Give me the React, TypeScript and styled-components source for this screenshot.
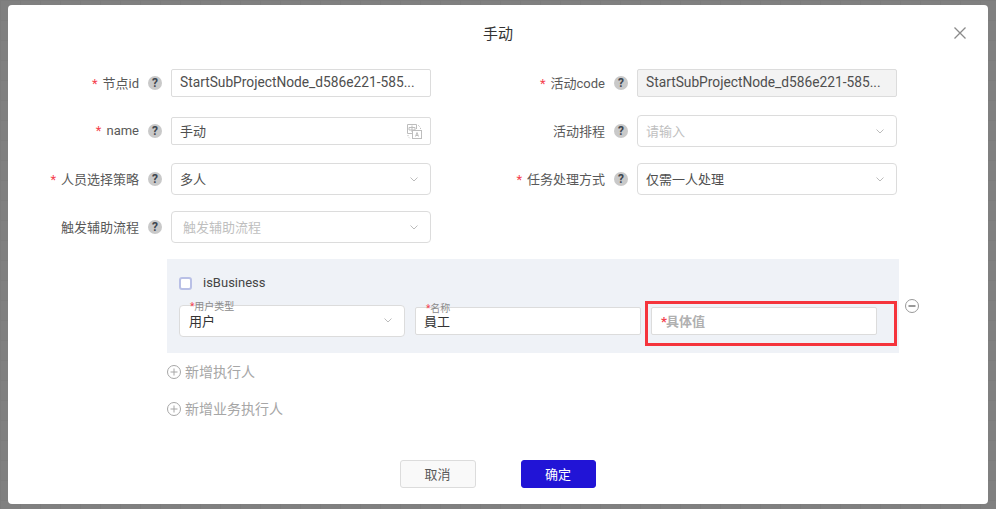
import React from "react";
import styled, { createGlobalStyle } from "styled-components";

const FONT = `Roboto, "Noto Sans CJK SC", sans-serif`;

const GlobalStyle = createGlobalStyle`
  html, body {
    margin: 0;
    padding: 0;
    height: 100%;
    font-family: ${FONT};
  }
`;

const Backdrop = styled.div`
  width: 996px;
  height: 509px;
  box-sizing: border-box;
  padding: 5px 8px;
  overflow: hidden;
  background-color: #808080;
  background-image: linear-gradient(#7c7c7c 1px, transparent 1px),
    linear-gradient(90deg, #7c7c7c 1px, transparent 1px);
  background-size: 20px 20px;
`;

const Modal = styled.div`
  position: relative;
  width: 980px;
  height: 499px;
  background: #fff;
  border-radius: 4px;
  display: flex;
  flex-direction: column;
`;

const Header = styled.div`
  height: 54px;
  flex: none;
  display: flex;
  align-items: center;
  justify-content: center;
  font-size: 15px;
  color: #333;
`;

const CloseButton = styled.button`
  position: absolute;
  top: 22px;
  right: 22px;
  width: 12px;
  height: 12px;
  padding: 0;
  border: 0;
  background: none;
  display: flex;
  color: #8a8a8a;
`;

const FormGrid = styled.div`
  margin-top: 8px;
  display: grid;
  grid-template-columns: 466px 466px;
  grid-auto-rows: 32px;
  row-gap: 16px;
`;

const Field = styled.div`
  display: flex;
  align-items: center;
`;

const Label = styled.label`
  width: 131px;
  flex: none;
  padding-bottom: 1px;
  text-align: right;
  font-size: 13px;
  color: #595959;
  white-space: nowrap;
`;

const Star = styled.span`
  color: #f5414d;
  margin-right: 5px;
`;

const HelpSlot = styled.span`
  width: 32px;
  flex: none;
  display: flex;
  justify-content: center;
`;

const Help = styled.span`
  width: 14px;
  height: 14px;
  border-radius: 50%;
  background: #c9c9c9;
  color: #3f4650;
  font-size: 12px;
  font-weight: 700;
  line-height: 14px;
  text-align: center;
`;

const Control = styled.div<{ $kind?: "input" | "select"; $disabled?: boolean }>`
  width: 260px;
  height: ${(p) => (p.$kind === "select" ? "32px" : "28px")};
  box-sizing: border-box;
  display: flex;
  align-items: center;
  justify-content: space-between;
  padding: 0 ${(p) => (p.$kind === "select" ? "12px" : "8px")} 0 8px;
  border: 1px solid #dcdcdc;
  border-radius: ${(p) => (p.$kind === "select" ? "4px" : "2px")};
  background: ${(p) => (p.$disabled ? "#f3f3f3" : "#fff")};
  font-size: 13px;
  color: #4a4a4a;
`;

const Value = styled.span<{ $placeholder?: boolean; $indent?: number; $latin?: boolean }>`
  color: ${(p) => (p.$placeholder ? "#bfbfbf" : "#4f4f4f")};
  padding-left: ${(p) => p.$indent ?? 0}px;
  padding-bottom: 2px;
  font-size: ${(p) => (p.$latin ? "13.75px" : "13px")};
  white-space: nowrap;
`;

const Panel = styled.div`
  margin: 16px 0 0 159px;
  width: 732px;
  height: 94px;
  box-sizing: border-box;
  padding: 18px 22px 0 12px;
  background: #eff2f7;
  position: relative;
`;

const CheckRow = styled.label`
  display: flex;
  align-items: center;
  height: 12px;
  font-size: 13px;
  color: #444;
`;

const CheckText = styled.span`
  padding-bottom: 2px;
`;

const CheckBox = styled.span`
  width: 13px;
  height: 13px;
  box-sizing: border-box;
  margin-right: 11px;
  border: 2px solid #b9c0e6;
  border-radius: 3px;
  background: #fff;
`;

const Executors = styled.div`
  margin-top: 16px;
  height: 32px;
  display: flex;
  align-items: center;
  gap: 10px;
`;

const Floating = styled.div<{ $kind?: "input" | "select"; $mark?: boolean }>`
  position: relative;
  width: 226px;
  height: ${(p) => (p.$kind === "select" ? "32px" : "28px")};
  box-sizing: border-box;
  display: flex;
  align-items: center;
  justify-content: space-between;
  padding: 0 12px 2px ${(p) => (p.$kind === "select" ? "9px" : "8px")};
  background: #fff;
  border: 1px solid #dcdcdc;
  border-radius: ${(p) => (p.$kind === "select" ? "4px" : "2px")};
  font-size: 13px;
  color: #333;
  ${(p) =>
    p.$mark &&
    `
    &::after {
      content: "";
      position: absolute;
      top: -7px;
      left: -7px;
      right: -21px;
      bottom: -12px;
      border: 3px solid #f5343c;
    }
  `}
`;

const FloatLabel = styled.span`
  position: absolute;
  top: -5px;
  left: 9px;
  padding: 0 2px 0 1px;
  font-size: 10px;
  line-height: 11px;
  color: #8c8c8c;
  background: linear-gradient(transparent 50%, #fff 50%);
`;

const InlineHint = styled.span`
  padding-left: 1px;
  font-size: 13px;
  font-weight: 700;
  color: #b0b0b0;
`;

const SmallStar = styled.span<{ $tight?: boolean }>`
  color: #f5414d;
  margin-right: ${(p) => (p.$tight ? "-1px" : "0")};
`;

const MinusIcon = styled.svg`
  position: absolute;
  top: 40px;
  right: -20px;
`;

const AddRow = styled.div`
  margin-left: 159px;
  height: 37px;
  display: flex;
  align-items: center;
  gap: 4px;
  font-size: 14px;
  color: #a6a6a6;
`;

const AddText = styled.span`
  padding-bottom: 1px;
`;

const Footer = styled.div`
  margin-top: 33px;
  display: flex;
  justify-content: center;
  gap: 45px;
  padding-right: 1px;
`;

const Button = styled.button<{ $primary?: boolean }>`
  width: ${(p) => (p.$primary ? "75px" : "76px")};
  height: 28px;
  box-sizing: border-box;
  padding: 0 0 2px;
  border-radius: 3px;
  border: 1px solid ${(p) => (p.$primary ? "#2114d6" : "#dcdcdc")};
  background: ${(p) => (p.$primary ? "#2114d6" : "#f9f9f9")};
  color: ${(p) => (p.$primary ? "#fff" : "#595959")};
  font-family: ${FONT};
  font-size: 13px;
`;

const Chevron = () => (
  <svg width="8" height="5" viewBox="0 0 8 5" fill="none" stroke="#bcbcbc" strokeWidth="1">
    <path d="M0.5 0.5 4 4 7.5 0.5" />
  </svg>
);

const TranslateIcon = () => (
  <svg width="15" height="15" viewBox="0 0 15 15" fill="none" stroke="#bdbdbd" strokeWidth="1">
    <path d="M9.5 5V0.5H0.5V9.5H5" />
    <rect x="5.5" y="6.5" width="9" height="8" />
    <path d="M2 3.5H8M2 3.5V6H8V3.5M5 1.5V8" />
    <path d="M8.5 12.5 10 8.5 11.5 12.5M9 11.5H11" />
    <path d="M11 1 13.5 3.5V5M1 11V12.5L3 14.5" strokeDasharray="1 1" />
  </svg>
);

const PlusCircle = () => (
  <svg width="14" height="14" viewBox="0 0 14 14" fill="none" stroke="#a6a6a6" strokeWidth="1">
    <circle cx="7" cy="7" r="6.5" />
    <path d="M3.5 7H10.5M7 3.5V10.5" />
  </svg>
);

type FormField = {
  label: string;
  required?: boolean;
  kind?: "input" | "select";
  value: string;
  placeholder?: boolean;
  indent?: number;
  disabled?: boolean;
  translate?: boolean;
  latin?: boolean;
};

const FIELDS: FormField[] = [
  { label: "节点id", required: true, value: "StartSubProjectNode_d586e221-585...", latin: true },
  { label: "活动code", required: true, value: "StartSubProjectNode_d586e221-585...", disabled: true, latin: true },
  { label: "name", required: true, value: "手动", translate: true },
  { label: "活动排程", kind: "select", value: "请输入", placeholder: true },
  { label: "人员选择策略", required: true, kind: "select", value: "多人" },
  { label: "任务处理方式", required: true, kind: "select", value: "仅需一人处理" },
  { label: "触发辅助流程", kind: "select", value: "触发辅助流程", placeholder: true, indent: 3 },
];

const App = () => {
  return (
    <Backdrop>
      <GlobalStyle />
      <Modal>
        <Header>手动</Header>
        <CloseButton aria-label="close">
          <svg width="12" height="12" viewBox="0 0 12 12" fill="none" stroke="currentColor" strokeWidth="1.3">
            <path d="M0.5 0.5 11.5 11.5M11.5 0.5 0.5 11.5" />
          </svg>
        </CloseButton>

        <FormGrid>
          {FIELDS.map((f) => (
            <Field key={f.label}>
              <Label>
                {f.required && <Star>*</Star>}
                {f.label}
              </Label>
              <HelpSlot>
                <Help>?</Help>
              </HelpSlot>
              <Control $kind={f.kind} $disabled={f.disabled}>
                <Value $placeholder={f.placeholder} $indent={f.indent} $latin={f.latin}>
                  {f.value}
                </Value>
                {f.kind === "select" && <Chevron />}
                {f.translate && <TranslateIcon />}
              </Control>
            </Field>
          ))}
        </FormGrid>

        <Panel>
          <CheckRow>
            <CheckBox />
            <CheckText>isBusiness</CheckText>
          </CheckRow>
          <Executors>
            <Floating $kind="select">
              <FloatLabel>
                <SmallStar>*</SmallStar>用户类型
              </FloatLabel>
              用户
              <Chevron />
            </Floating>
            <Floating>
              <FloatLabel>
                <SmallStar>*</SmallStar>名称
              </FloatLabel>
              員工
            </Floating>
            <Floating $mark>
              <InlineHint>
                <SmallStar $tight>*</SmallStar>具体值
              </InlineHint>
            </Floating>
          </Executors>
          <MinusIcon width="14" height="14" viewBox="0 0 14 14" fill="none" stroke="#999" strokeWidth="1">
            <circle cx="7" cy="7" r="6.5" />
            <path d="M3.5 7H10.5" strokeWidth="2" />
          </MinusIcon>
        </Panel>

        <AddRow>
          <PlusCircle />
          <AddText>新增执行人</AddText>
        </AddRow>
        <AddRow>
          <PlusCircle />
          <AddText>新增业务执行人</AddText>
        </AddRow>

        <Footer>
          <Button>取消</Button>
          <Button $primary>确定</Button>
        </Footer>
      </Modal>
    </Backdrop>
  );
};

export default App;
